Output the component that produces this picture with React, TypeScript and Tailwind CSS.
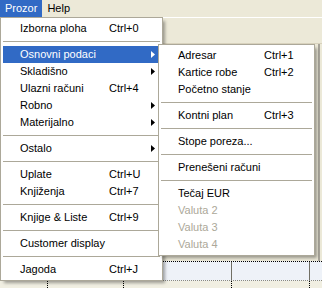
import React from 'react';

type MenuEntry =
  | { kind: 'item'; label: string; shortcut?: string; sub?: boolean; active?: boolean; disabled?: boolean }
  | { kind: 'sep' };

const mainItems: MenuEntry[] = [
  { kind: 'item', label: 'Izborna ploha', shortcut: 'Ctrl+0' },
  { kind: 'sep' },
  { kind: 'item', label: 'Osnovni podaci', sub: true, active: true },
  { kind: 'item', label: 'Skladišno', sub: true },
  { kind: 'item', label: 'Ulazni računi', shortcut: 'Ctrl+4' },
  { kind: 'item', label: 'Robno', sub: true },
  { kind: 'item', label: 'Materijalno', sub: true },
  { kind: 'sep' },
  { kind: 'item', label: 'Ostalo', sub: true },
  { kind: 'sep' },
  { kind: 'item', label: 'Uplate', shortcut: 'Ctrl+U' },
  { kind: 'item', label: 'Knjiženja', shortcut: 'Ctrl+7' },
  { kind: 'sep' },
  { kind: 'item', label: 'Knjige & Liste', shortcut: 'Ctrl+9' },
  { kind: 'sep' },
  { kind: 'item', label: 'Customer display' },
  { kind: 'sep' },
  { kind: 'item', label: 'Jagoda', shortcut: 'Ctrl+J' },
];

const subItems: MenuEntry[] = [
  { kind: 'item', label: 'Adresar', shortcut: 'Ctrl+1' },
  { kind: 'item', label: 'Kartice robe', shortcut: 'Ctrl+2' },
  { kind: 'item', label: 'Početno stanje' },
  { kind: 'sep' },
  { kind: 'item', label: 'Kontni plan', shortcut: 'Ctrl+3' },
  { kind: 'sep' },
  { kind: 'item', label: 'Stope poreza...' },
  { kind: 'sep' },
  { kind: 'item', label: 'Prenešeni računi' },
  { kind: 'sep' },
  { kind: 'item', label: 'Tečaj EUR' },
  { kind: 'item', label: 'Valuta 2', disabled: true },
  { kind: 'item', label: 'Valuta 3', disabled: true },
  { kind: 'item', label: 'Valuta 4', disabled: true },
];

const Arrow = ({ white }: { white?: boolean }) => (
  <svg width="4" height="7" viewBox="0 0 4 7" className="shrink-0">
    <polygon points="0,0 4,3.5 0,7" fill={white ? '#ffffff' : '#000000'} />
  </svg>
);

const MenuList = ({ items, labelWidth }: { items: MenuEntry[]; labelWidth: string }) => (
  <div className="flex flex-col">
    {items.map((it, i) =>
      it.kind === 'sep' ? (
        <div key={i} className="h-[9px] flex items-center">
          <div className="h-px w-full bg-[#ACA899]" />
        </div>
      ) : (
        <div
          key={i}
          className={`h-[17px] flex items-center pl-[17px] pr-[5px] ${
            it.active ? 'bg-[#316AC5] text-white' : it.disabled ? 'text-[#ACA899]' : 'text-black'
          }`}
        >
          <span className={`${labelWidth} shrink-0 whitespace-nowrap`}>{it.label}</span>
          <span className="flex-1 whitespace-nowrap">{it.shortcut}</span>
          {it.sub && <Arrow white={it.active} />}
        </div>
      )
    )}
  </div>
);

export default function App() {
  return (
    <div
      className="relative w-[322px] h-[288px] overflow-hidden bg-[#ECE9D8] text-[11px] leading-[17px] flex flex-col"
      style={{ fontFamily: '"Liberation Sans", Arial, sans-serif' }}
    >
      {/* menu bar */}
      <div className="h-[18px] flex items-stretch shrink-0 border-b border-white">
        <div className="px-[5px] bg-[#316AC5] text-white flex items-center">Prozor</div>
        <div className="px-[5px] text-black flex items-center">Help</div>
      </div>

      {/* window content behind the menus */}
      <div className="h-[26px] shrink-0 border-b border-[#D8D2BD]" />
      <div className="flex-1 flex">
        <div className="flex-1" />
        <div className="w-[3px] border-l-2 border-[#A7A49A] mr-[1px]" />
      </div>
      <div className="h-[20px] shrink-0 flex bg-[#EEF2F8] border-t border-dotted border-black border-b border-b-[#8C8A7C]">
        <div className="w-[232px] border-r border-[#716F64]" />
        <div className="w-[78px] border-r border-[#716F64]" />
        <div className="flex-1" />
      </div>
      <div className="h-[7px] shrink-0 flex bg-[#F1EFE2]">
        <div className="w-[48px] border-r border-dotted border-black" />
        <div className="w-[76px] border-r border-dotted border-black" />
        <div className="w-[108px] border-r border-dotted border-black" />
        <div className="w-[78px] border-r border-dotted border-black" />
        <div className="flex-1" />
      </div>

      {/* Prozor dropdown */}
      <div className="absolute left-0 top-[17px] w-[163px] bg-white border border-[#ACA899] p-[2px] shadow-[3px_3px_3px_-1px_rgba(0,0,0,0.35)]">
        <MenuList items={mainItems} labelWidth="w-[89px]" />
      </div>

      {/* Osnovni podaci submenu */}
      <div className="absolute left-[158px] top-[44px] w-[157px] bg-white border border-[#ACA899] p-[2px] shadow-[3px_3px_3px_-1px_rgba(0,0,0,0.35)]">
        <MenuList items={subItems} labelWidth="w-[86px]" />
      </div>
    </div>
  );
}
